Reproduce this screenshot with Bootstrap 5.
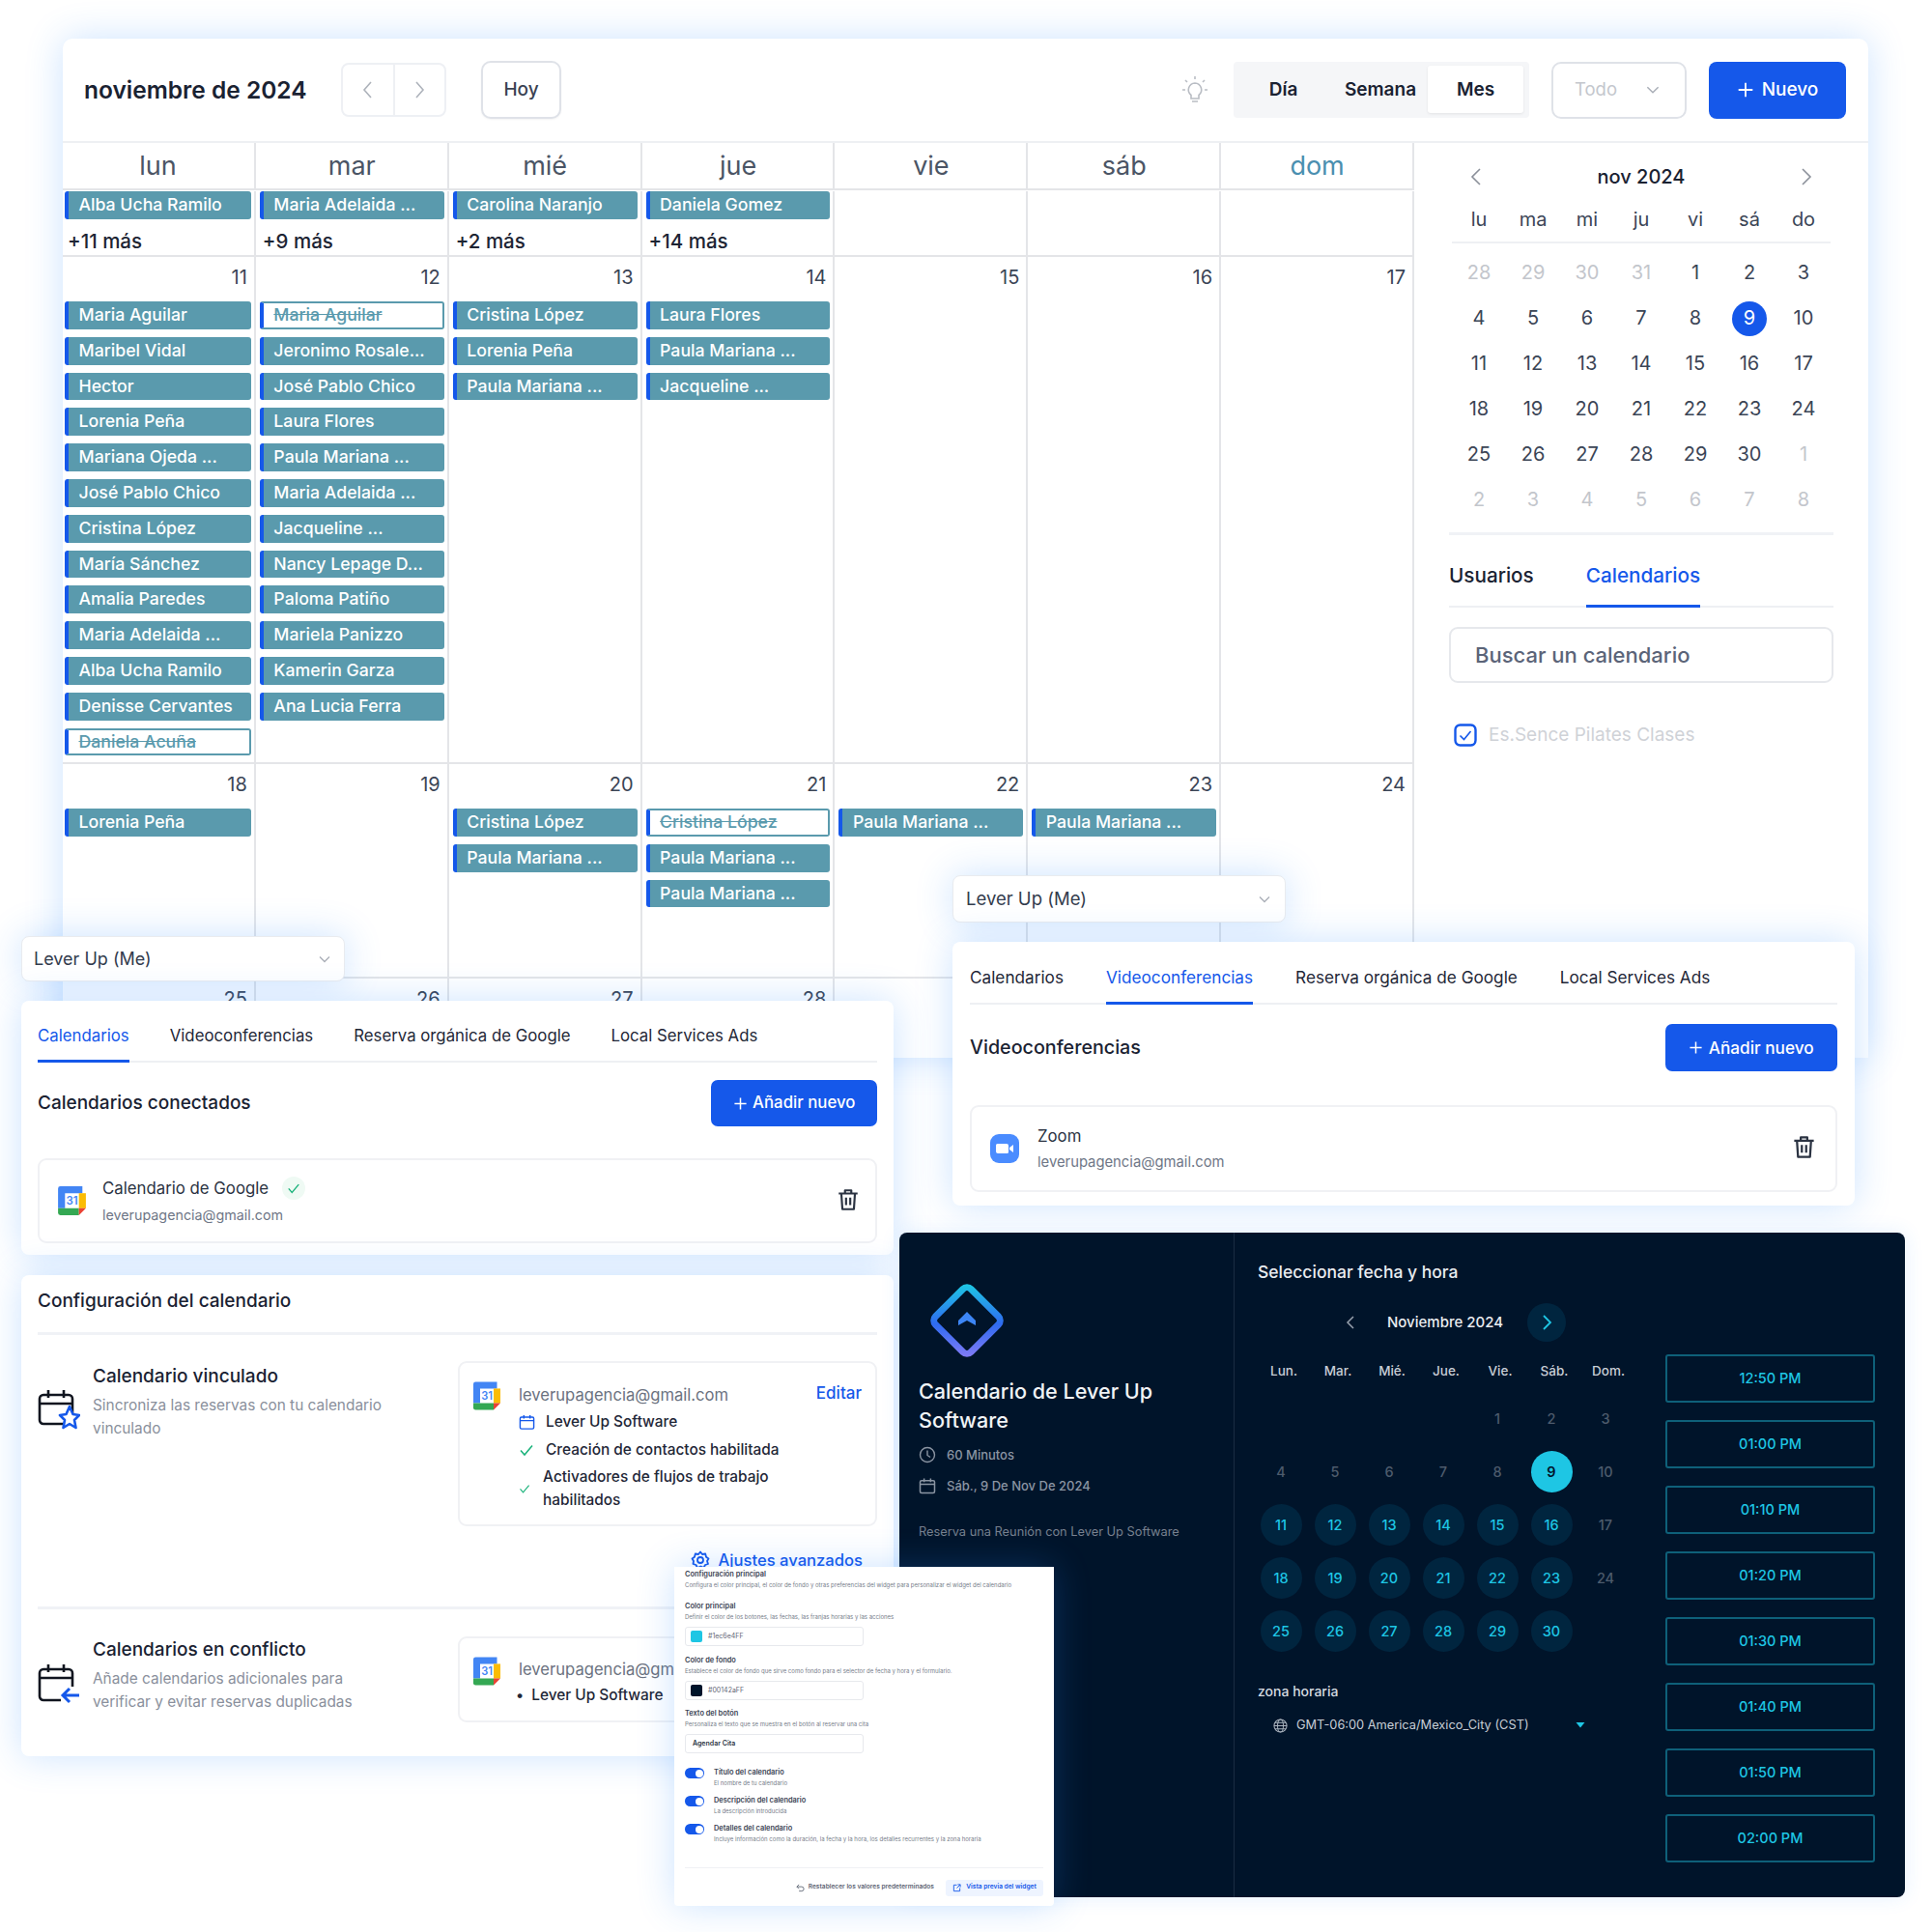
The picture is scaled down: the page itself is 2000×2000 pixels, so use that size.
<!DOCTYPE html>
<html lang="es">
<head>
  <meta charset="UTF-8" />
  <title>Lever Up - Calendarios</title>
  <link href="https://cdn.jsdelivr.net/npm/bootstrap@5.3.6/dist/css/bootstrap.min.css" rel="stylesheet" />
  <style>
    body {
      background: #fff;
      font-family: Inter, "Liberation Sans", sans-serif;
      color: #1d2433;
      width: 2000px;
      height: 2000px;
      position: relative;
      overflow: hidden;
    }

    /* windows of the collage */
    .win { position: absolute; background: #fff; box-shadow: 0 0 38px rgba(40, 140, 255, .24); border-radius: 8px; }
    .win-main { left: 65px; top: 40px; width: 1869px; height: 1055px; border-radius: 10px 10px 0 0; overflow: hidden; z-index: 1; }
    .win-sel-a { left: 22px; top: 969px; width: 335px; height: 47px; z-index: 2; }
    .win-tabs-a { left: 22px; top: 1036px; width: 903px; height: 263px; z-index: 2; padding: 25px 17px 0; }
    .win-conf { left: 22px; top: 1320px; width: 903px; height: 498px; z-index: 2; padding: 15px 17px 0; }
    .win-sel-c { left: 986px; top: 906px; width: 345px; height: 49px; z-index: 2; }
    .win-tabs-c { left: 986px; top: 975px; width: 934px; height: 273px; z-index: 2; padding: 26px 18px 0; }
    .win-dark { left: 931px; top: 1276px; width: 1041px; height: 688px; background: #00142a; color: #fff; z-index: 3; box-shadow: 0 0 20px rgba(40, 140, 255, .12); }
    .win-widget { left: 698px; top: 1622px; width: 393px; height: 351px; z-index: 4; border-radius: 0 0 4px 4px; padding: 0 11px; overflow: hidden; }

    .win-sel-a, .win-sel-c { border: 1px solid #e9ebef; font-size: 18px; color: #333c4d; padding: 0 12px; display: flex; align-items: center; justify-content: space-between; }
    .win-sel-c { font-size: 18.5px; padding: 0 13px; }

    /* calendar header */
    .cal-top { height: 108px; padding: 0 23px 0 22px; border-bottom: 2px solid #eef0f3; }
    .cal-title { font-size: 24.5px; font-weight: 600; width: 231px; color: #1a2232; white-space: nowrap; }
    .pager { width: 109px; height: 56px; margin-left: 35px; border: 2px solid #eef0f4; border-radius: 8px; }
    .pager > div { flex: 1; }
    .pager > div + div { border-left: 2px solid #eef0f4; }
    .btn-hoy { width: 83px; height: 60px; margin-left: 36px; border: 2px solid #dfe2e8; border-radius: 10px; font-size: 19px; font-weight: 500; color: #3a4252; background: #fff; box-shadow: 0 1px 2px rgba(0,0,0,.05); }
    .segment { width: 306px; height: 58px; background: #f5f6f8; border-radius: 4px; padding: 4px 4px 5px 0; font-size: 19px; font-weight: 600; color: #1a2232; margin-left: 26px; }
    .segment span { text-align: center; margin-top: 1px; }
    .segment .seg-on { width: 99px; background: #fff; border-radius: 3px; box-shadow: 0 1px 3px rgba(0,0,0,.08); line-height: 49px; margin-top: 0; }
    .btn-todo { width: 140px; height: 59px; margin-left: 23px; border: 2px solid #dfe2e8; border-radius: 10px; font-size: 18.5px; color: #c4c7cd; background: #fff; padding: 0 24px 0 22px; }
    .btn-blue { background: #1558ea; color: #fff; border: 0; border-radius: 7px; font-weight: 500; }
    .btn-blue:hover { background: #1558ea; color: #fff; }
    .btn-nuevo { width: 142px; height: 59px; margin-left: 23px; font-size: 19px; border-radius: 8px; }

    /* month grid */
    .month-grid { width: 1399px; flex: none; }
    .week { display: grid; grid-template-columns: repeat(7, 199.86px); border-bottom: 2px solid #e4e5e8; }
    .week > div { border-right: 2px solid #e4e5e8; padding: 0 3px 0 4px; min-width: 0; }
    .week > div:first-child { padding-left: 2px; }
    .wk-head { height: 49px; }
    .wk-head > div { font-size: 27px; text-align: center; color: #4b5565; line-height: 47px; }
    .wk-head > div:last-child { color: #4a8fb0; }
    .wk-1 { height: 69px; padding-top: 1px; }
    .wk-2 { height: 525px; }
    .wk-3 { height: 222px; }
    .wk-4 { height: 90px; }
    .day-num { text-align: right; font-size: 20px; color: #3b4556; height: 46px; line-height: 43px; padding-right: 4px; }
    .ev { height: 28.8px; margin-bottom: 8px; background: #5a9aad; border-left: 4px solid #1558ea; border-radius: 3px; color: #fff; font-size: 17.7px; font-weight: 500; line-height: 28px; padding-left: 10.5px; white-space: nowrap; overflow: hidden; }
    .ev-off { background: #fff; border: 2px solid #5a9aad; border-left: 4px solid #1558ea; color: #5a9aad; text-decoration: line-through; line-height: 24px; padding-left: 10.5px; }
    .more { font-size: 20.5px; font-weight: 500; color: #1d2433; padding-left: 3px; margin-top: 3px; line-height: 30px; }

    /* sidebar */
    .side { width: 470px; padding: 0 36px 0 36px; }
    .mini-title { margin-top: 23px; height: 24px; padding: 0 20px; font-size: 20px; font-weight: 500; color: #1a2232; }
    .mini-grid { display: grid; grid-template-columns: repeat(7, 56px); width: 392px; margin-left: 3px; font-size: 20px; color: #3b4556; text-align: center; }
    .mini-heads { margin-top: 17px; padding-bottom: 8px; border-bottom: 2px solid #eef0f3; line-height: 30px; }
    .mini-days { margin-top: 7px; grid-auto-rows: 47px; line-height: 47px; padding-bottom: 10px; border-bottom: 0; }
    .mini-days .dim { color: #c3c6cc; }
    .mini-days .today { position: relative; color: #fff; z-index: 0; }
    .mini-days .today::before { content: ""; position: absolute; z-index: -1; left: 10px; top: 6px; width: 36px; height: 36px; background: #1558ea; border-radius: 50%; }
    .side-tabs { margin-top: 0; border-top: 3px solid #f0f2f6; padding-top: 30px; border-bottom: 2px solid #eef0f3; font-size: 20.7px; font-weight: 500; gap: 54px; color: #1a2232; }
    .side-tabs span { padding-bottom: 18px; margin-bottom: -2px; line-height: 24px; }
    .tab-on { color: #1558ea; border-bottom: 3px solid #1558ea; }
    .side-search { height: 58px; margin-top: 20px; border: 2px solid #e6e8ec; border-radius: 9px; padding-left: 25px; font-size: 22px; font-weight: 500; line-height: 54px; color: #5b6478; }
    .side-check { margin: 40px 0 0 5px; font-size: 19px; color: #cfd2d7; gap: 12px; }

    /* tabs + cards in the settings windows */
    .set-tabs { border-bottom: 2px solid #eef0f3; font-size: 16.8px; gap: 42px; color: #1f2737; }
    .set-tabs span { padding-bottom: 14px; margin-bottom: -2px; line-height: 22px; }
    .set-tabs .tab-on { border-bottom-width: 3px; }
    .set-title { font-size: 19px; font-weight: 500; color: #1a2232; }
    .btn-add { height: 48px; font-size: 16.8px; padding: 0; gap: 5.5px; }
    .acc-card { border: 2px solid #f0f1f4; border-radius: 9px; background: #fff; }
    .acc-name { font-size: 16.8px; color: #2b3342; line-height: 22px; }
    .acc-mail { font-size: 14.3px; color: #6f7787; line-height: 22px; margin-top: 5px; }
    .acc-bin { margin-top: -3px; }
    .ok-dot { width: 24px; height: 24px; border-radius: 50%; background: #effaf4; margin-left: 14px; }
    .conf-rule { height: 3px; background: #f0f2f6; }
    .conf-head { font-size: 19px; font-weight: 500; color: #1a2232; line-height: 24px; }
    .conf-desc { font-size: 15.4px; color: #8a909c; line-height: 24px; margin-top: 6px; }
    .link-card { width: 434px; border: 2px solid #f0f1f4; border-radius: 9px; padding: 19px 14px 0; flex: none; }
    .link-mail { font-size: 16.6px; color: #6b7280; line-height: 24px; }
    .link-edit { font-size: 17px; font-weight: 500; color: #1558ea; }
    .link-row { font-size: 15.4px; font-weight: 500; color: #1f2737; line-height: 24px; }

    /* widget settings, shown small */
    .w-h { font-size: 7.4px; font-weight: 600; color: #3c4454; line-height: 10px; }
    .w-d { font-size: 6px; color: #767d8a; line-height: 10px; margin-top: 1px; white-space: nowrap; }
    .w-in { width: 185px; height: 20px; border: 1px solid #e7e9ed; border-radius: 3px; font-size: 7px; color: #5f6675; padding-left: 5px; margin-top: 5px; gap: 6px; }
    .w-sw { width: 12px; height: 12px; border-radius: 2px; }
    .w-toggle { width: 20px; height: 11px; border-radius: 6px; background: #1558ea; position: relative; flex: none; margin-right: 10px; }
    .w-toggle::after { content: ""; position: absolute; right: 1.5px; top: 1.5px; width: 8px; height: 8px; border-radius: 50%; background: #fff; }
    .w-foot { border-top: 1px solid #f0f1f4; height: 41px; font-size: 6.6px; font-weight: 600; color: #5f6675; margin-top: 24px; }
    .w-prev { height: 17px; width: 101px; background: #eef4ff; color: #1558ea; border-radius: 3px; margin-left: 12px; gap: 5px; }

    /* booking widget */
    .dk-left { width: 347px; height: 100%; border-right: 1px solid #1a2c42; padding: 49px 0 0 20px; flex: none; }
    .dk-title { font-size: 21.6px; font-weight: 500; line-height: 30px; margin-top: 16px; color: #f1f3f6; }
    .dk-meta { font-size: 13px; font-weight: 500; color: #8b95a3; line-height: 22px; gap: 11px; }
    .dk-note { font-size: 12.8px; color: #77818f; line-height: 22px; margin-top: 26px; }
    .dk-right { padding: 30px 0 0 24px; }
    .dk-head { font-size: 17.5px; font-weight: 500; color: #e9ecf0; line-height: 22px; }
    .dk-next { width: 40px; height: 40px; border-radius: 50%; background: #00253f; margin-left: -5px; }
    .dk-month { width: 180px; text-align: center; font-size: 15px; font-weight: 500; color: #e9ecf0; }
    .dk-grid { display: grid; grid-template-columns: repeat(7, 56px); margin-left: -4px; text-align: center; }
    .dk-heads { margin-top: 18px; font-size: 13.5px; font-weight: 500; color: #c8ced6; line-height: 22px; padding-left: 3px; }
    .dk-days { margin-top: 11px; grid-auto-rows: 55px; font-size: 14.5px; font-weight: 500; color: #4d5b6c; }
    .dk-days > div { display: flex; align-items: center; justify-content: center; }
    .dk-on { width: 43px; height: 43px; border-radius: 50%; background: #00253f; color: #1ec6e4; }
    .dk-sel { background: #1ec6e4; color: #00142a; font-weight: 600; }
    .dk-tz { font-size: 14px; font-weight: 500; color: #d5dae0; line-height: 22px; margin-top: 24px; }
    .dk-zone { font-size: 12.8px; color: #c8ced6; margin: 12px 0 0 16px; width: 323px; line-height: 24px; }
    .dk-slots { margin-top: 54px; gap: 18px; width: 217px; }
    .dk-slot { height: 50px; border: 2px solid #0e6079; border-radius: 3px; color: #1ec6e4; font-size: 14.5px; font-weight: 500; }
  </style>
</head>
<body>
  <svg width="0" height="0" class="position-absolute">
    <defs>
      <symbol id="gcal" viewBox="0 0 24 25">
        <rect width="24" height="25" rx="2" fill="#fff" />
        <path d="M2 0H21V6H6V19H0V2A2 2 0 0 1 2 0Z" fill="#4285f4" />
        <rect x="18" y="6" width="6" height="13" fill="#fbbc04" />
        <path d="M0 19H18V25H2A2 2 0 0 1 0 23Z" fill="#34a853" />
        <path d="M18 25V19H24Z" fill="#ea4335" />
        <text x="12" y="16" font-size="9.5" font-weight="600" text-anchor="middle" fill="#4285f4" font-family="Inter, sans-serif">31</text>
      </symbol>
      <symbol id="trash" viewBox="0 0 24 24">
        <path d="M3 6H21M9 6V3H15V6M5.5 6L6.5 21H17.5L18.5 6M10 10V17M14 10V17" fill="none" stroke="#2b3342" stroke-width="2" stroke-linejoin="round" />
      </symbol>
      <symbol id="plus" viewBox="0 0 16 16">
        <path d="M8 1.5V14.5M1.5 8H14.5" stroke="#fff" stroke-width="1.6" fill="none" />
      </symbol>
      <symbol id="drop" viewBox="0 0 16 16">
        <path d="M3 5.5L8 10.5L13 5.5" stroke="#a9aeb7" stroke-width="1.3" fill="none" />
      </symbol>
      <symbol id="tick" viewBox="0 0 16 16">
        <path d="M2 8.5L6 13L14 3.5" stroke="#19b27a" stroke-width="1.5" fill="none" />
      </symbol>
      <symbol id="calico" viewBox="0 0 24 24">
        <path d="M4 5H20A2 2 0 0 1 22 7V20A2 2 0 0 1 20 22H4A2 2 0 0 1 2 20V7A2 2 0 0 1 4 5ZM2 10H22M7.5 2V7M16.5 2V7" fill="none" stroke="currentColor" stroke-width="2" />
      </symbol>
      <linearGradient id="logoG" x1="0" y1="0" x2="1" y2="1">
        <stop offset="0" stop-color="#1ec6e4" />
        <stop offset=".55" stop-color="#2f6bf0" />
        <stop offset="1" stop-color="#7f7bf5" />
      </linearGradient>
    </defs>
  </svg>

  <!-- main calendar -->
  <div class="win win-main">
    <div class="cal-top d-flex align-items-center">
      <div class="cal-title">noviembre de 2024</div>
      <div class="pager d-flex">
        <div class="d-flex align-items-center justify-content-center">
          <svg width="16" height="22" viewBox="0 0 16 22"><path d="M11 3L4 11L11 19" fill="none" stroke="#aeb3bb" stroke-width="1.6" /></svg>
        </div>
        <div class="d-flex align-items-center justify-content-center">
          <svg width="16" height="22" viewBox="0 0 16 22"><path d="M5 3L12 11L5 19" fill="none" stroke="#aeb3bb" stroke-width="1.6" /></svg>
        </div>
      </div>
      <button class="btn btn-hoy p-0">Hoy</button>
      <div class="ms-auto d-flex align-items-center">
        <svg width="28" height="30" viewBox="0 0 28 30" fill="none" stroke="#b9bdc4" stroke-width="1.6">
          <path d="M14 8A7 7 0 0 1 18 20.5V24H10V20.5A7 7 0 0 1 14 8ZM11 27H17" />
          <path d="M14 1V4M4 5L6 7M24 5L22 7M1 15H4M24 15H27" />
        </svg>
        <div class="segment d-flex align-items-center">
          <span style="width:103px">Día</span>
          <span style="width:98px">Semana</span>
          <span class="seg-on">Mes</span>
        </div>
        <button class="btn btn-todo d-flex align-items-center justify-content-between">
          Todo
          <svg width="18" height="18"><use href="#drop" /></svg>
        </button>
        <button class="btn btn-blue btn-nuevo d-flex align-items-center justify-content-center gap-2 p-0">
          <svg width="18" height="18"><use href="#plus" /></svg>
          Nuevo
        </button>
      </div>
    </div>
    <div class="d-flex">
      <div class="month-grid" id="month-grid"></div>
      <div class="side">
        <div class="mini-title d-flex align-items-center justify-content-between">
          <svg width="16" height="22" viewBox="0 0 16 22"><path d="M12 3L4 11L12 19" fill="none" stroke="#8b909a" stroke-width="1.6" /></svg>
          <span>nov 2024</span>
          <svg width="16" height="22" viewBox="0 0 16 22"><path d="M4 3L12 11L4 19" fill="none" stroke="#8b909a" stroke-width="1.6" /></svg>
        </div>
        <div class="mini-grid mini-heads" id="mini-heads"></div>
        <div class="mini-grid mini-days" id="mini-days"></div>
        <div class="side-tabs d-flex">
          <span>Usuarios</span>
          <span class="tab-on">Calendarios</span>
        </div>
        <div class="side-search">Buscar un calendario</div>
        <div class="side-check d-flex align-items-center">
          <svg width="24" height="24" viewBox="0 0 24 24"><rect x="1.5" y="1.5" width="21" height="21" rx="5" fill="#fff" stroke="#1558ea" stroke-width="2.4" /><path d="M6.5 12.5L10.5 16.5L17.5 8" fill="none" stroke="#1558ea" stroke-width="1.6" /></svg>
          Es.Sence Pilates Clases
        </div>
      </div>
    </div>
  </div>

  <!-- connected calendars -->
  <div class="win win-sel-a">
    <span>Lever Up (Me)</span>
    <svg width="16" height="16"><use href="#drop" /></svg>
  </div>
  <div class="win win-tabs-a">
    <div class="set-tabs d-flex">
      <span class="tab-on">Calendarios</span>
      <span>Videoconferencias</span>
      <span>Reserva orgánica de Google</span>
      <span>Local Services Ads</span>
    </div>
    <div class="d-flex align-items-center justify-content-between" style="margin-top:18px">
      <div class="set-title">Calendarios conectados</div>
      <button class="btn btn-blue btn-add d-flex align-items-center justify-content-center" style="width:172px">
        <svg width="15" height="15"><use href="#plus" /></svg>Añadir nuevo
      </button>
    </div>
    <div class="acc-card d-flex align-items-center" style="margin-top:33px;height:88px;padding:0 15px 0 19px">
      <svg width="29" height="30"><use href="#gcal" /></svg>
      <div style="margin-left:17px">
        <div class="acc-name d-flex align-items-center">Calendario de Google
          <span class="ok-dot d-flex align-items-center justify-content-center"><svg width="14" height="14"><use href="#tick" /></svg></span>
        </div>
        <div class="acc-mail">leverupagencia@gmail.com</div>
      </div>
      <svg class="ms-auto acc-bin" width="26" height="26"><use href="#trash" /></svg>
    </div>
  </div>

  <!-- calendar configuration -->
  <div class="win win-conf">
    <div class="conf-head">Configuración del calendario</div>
    <div class="conf-rule" style="margin-top:20px"></div>
    <div class="d-flex" style="margin-top:27px">
      <div class="d-flex align-items-start flex-grow-1">
        <svg class="flex-none" style="margin-top:29px" width="44" height="42" viewBox="0 0 44 42">
          <g fill="none" stroke="#10151f" stroke-width="2.6"><path d="M6 6H32A4 4 0 0 1 36 10V36H6A4 4 0 0 1 2 32V10A4 4 0 0 1 6 6ZM2 15H36M11 1V9M27 1V9" /></g>
          <path d="M33 18L36.500 26L43 27L38 32L39.500 40L33 36L26.500 40L28 32L23 27L29.500 26Z" fill="#fff" stroke="#1558ea" stroke-width="2.6" stroke-linejoin="round" />
        </svg>
        <div style="margin-left:13px;width:330px">
          <div class="conf-head" style="margin-top:4px">Calendario vinculado</div>
          <div class="conf-desc">Sincroniza las reservas con tu calendario vinculado</div>
        </div>
      </div>
      <div class="link-card" style="height:171px">
        <div class="d-flex align-items-start">
          <svg width="28" height="30"><use href="#gcal" /></svg>
          <div class="flex-grow-1" style="margin-left:19px">
            <div class="d-flex justify-content-between">
              <span class="link-mail" style="margin-top:2px">leverupagencia@gmail.com</span>
              <span class="link-edit">Editar</span>
            </div>
            <div class="link-row d-flex align-items-center" style="height:29px;margin-top:1px">
              <svg style="color:#1558ea" width="17" height="18"><use href="#calico" /></svg>
              <span style="margin-left:11px">Lever Up Software</span>
            </div>
            <div class="link-row d-flex align-items-center" style="height:29px">
              <svg width="16" height="16"><use href="#tick" /></svg>
              <span style="margin-left:12px">Creación de contactos habilitada</span>
            </div>
            <div class="link-row d-flex align-items-center" style="margin-top:2px;width:300px">
              <svg class="flex-none" width="14" height="14"><use href="#tick" /></svg>
              <span style="margin-left:13px">Activadores de flujos de trabajo habilitados</span>
            </div>
          </div>
        </div>
      </div>
    </div>
    <div class="d-flex justify-content-end align-items-center" style="margin-top:23px;padding-right:15px;font-size:16.6px;font-weight:500;color:#1558ea;line-height:24px;gap:9px">
      <svg width="20" height="20" viewBox="0 0 20 20" fill="none" stroke="#1558ea" stroke-width="1.8"><path d="M10 1.500L12 4L15.200 3.500L16 6.700L18.500 8.500L17 11L18 14L15 15L13.500 18L10.500 16.500L7 18L5.500 15L2.500 14L3 11L1.500 8.500L4 6.700L4.800 3.500L8 4Z" stroke-linejoin="round" /><circle cx="10" cy="10" r="3" /></svg>
      Ajustes avanzados
    </div>
    <div class="conf-rule" style="margin-top:36px"></div>
    <div class="d-flex" style="margin-top:28px">
      <div class="d-flex align-items-start flex-grow-1">
        <svg class="flex-none" style="margin-top:28px" width="44" height="42" viewBox="0 0 44 42">
          <g fill="none" stroke="#10151f" stroke-width="2.6"><path d="M24 38H6A4 4 0 0 1 2 34V10A4 4 0 0 1 6 6H32A4 4 0 0 1 36 10V24M2 15H36M11 1V9M27 1V9" /></g>
          <path d="M43 33H26M33 26L26 33L33 40" fill="none" stroke="#1558ea" stroke-width="3" />
        </svg>
        <div style="margin-left:13px;width:310px">
          <div class="conf-head" style="margin-top:2px">Calendarios en conflicto</div>
          <div class="conf-desc">Añade calendarios adicionales para verificar y evitar reservas duplicadas</div>
        </div>
      </div>
      <div class="link-card" style="height:89px">
        <div class="d-flex align-items-start">
          <svg width="28" height="30"><use href="#gcal" /></svg>
          <div style="margin-left:19px">
            <div class="link-mail" style="margin-top:1px">leverupagencia@gm</div>
            <div class="link-row d-flex" style="margin:3px 0 0 -3px"><span>•</span><span style="margin-left:8px">Lever Up Software</span></div>
          </div>
        </div>
      </div>
    </div>
  </div>

  <!-- video conferencing -->
  <div class="win win-sel-c">
    <span>Lever Up (Me)</span>
    <svg width="16" height="16"><use href="#drop" /></svg>
  </div>
  <div class="win win-tabs-c">
    <div class="set-tabs d-flex" style="font-size:17.2px;gap:44px">
      <span>Calendarios</span>
      <span class="tab-on">Videoconferencias</span>
      <span>Reserva orgánica de Google</span>
      <span>Local Services Ads</span>
    </div>
    <div class="d-flex align-items-center justify-content-between" style="margin-top:20px">
      <div class="set-title" style="font-size:19.7px">Videoconferencias</div>
      <button class="btn btn-blue btn-add d-flex align-items-center justify-content-center" style="width:178px;height:49px;font-size:17.2px">
        <svg width="15" height="15"><use href="#plus" /></svg>Añadir nuevo
      </button>
    </div>
    <div class="acc-card d-flex align-items-center" style="margin-top:35px;height:90px;padding:0 19px 0 19px">
      <svg width="30" height="30" viewBox="0 0 30 30">
        <rect width="30" height="30" rx="9" fill="#4a8cff" />
        <path d="M6 11.500A1.500 1.500 0 0 1 7.500 10H17A2 2 0 0 1 19 12V18.500A1.500 1.500 0 0 1 17.500 20H8A2 2 0 0 1 6 18ZM20 14L24 11V19L20 16Z" fill="#fff" />
      </svg>
      <div style="margin-left:19px">
        <div class="acc-name">Zoom</div>
        <div class="acc-mail" style="font-size:14.8px">leverupagencia@gmail.com</div>
      </div>
      <svg class="ms-auto acc-bin" width="27" height="27"><use href="#trash" /></svg>
    </div>
  </div>

  <!-- booking widget -->
  <div class="win win-dark d-flex">
    <div class="dk-left">
      <svg style="margin-left:8px" width="84" height="84" viewBox="0 0 84 84">
        <rect x="16" y="16" width="52" height="52" rx="6" transform="rotate(45 42 42)" fill="none" stroke="url(#logoG)" stroke-width="7" />
        <path d="M42 33L51 42V47L42 42L33 47V42Z" fill="#3d86f5" />
      </svg>
      <div class="dk-title">Calendario de Lever Up<br />Software</div>
      <div class="dk-meta d-flex align-items-center" style="margin-top:10px">
        <svg width="18" height="18" viewBox="0 0 18 18" fill="none" stroke="#8b95a3" stroke-width="1.400"><circle cx="9" cy="9" r="7.500" /><path d="M9 4.500V9.500L12 11.500" /></svg>
        60 Minutos
      </div>
      <div class="dk-meta d-flex align-items-center" style="margin-top:10px">
        <svg width="18" height="18" style="color:#8b95a3"><use href="#calico" /></svg>
        Sáb., 9 De Nov De 2024
      </div>
      <div class="dk-note">Reserva una Reunión con Lever Up Software</div>
    </div>
    <div class="dk-right flex-grow-1">
      <div class="dk-head">Seleccionar fecha y hora</div>
      <div class="d-flex" style="margin-top:20px">
        <div style="width:422px;flex:none">
          <div class="d-flex align-items-center" style="height:42px;margin-left:88px">
            <svg width="16" height="20" viewBox="0 0 16 20"><path d="M11 4L5 10L11 16" fill="none" stroke="#98a2ae" stroke-width="1.500" /></svg>
            <div class="dk-month">Noviembre 2024</div>
            <div class="dk-next d-flex align-items-center justify-content-center">
              <svg width="16" height="20" viewBox="0 0 16 20"><path d="M5 3L12 10L5 17" fill="none" stroke="#1ec6e4" stroke-width="1.800" /></svg>
            </div>
          </div>
          <div class="dk-grid dk-heads" id="dk-heads"></div>
          <div class="dk-grid dk-days" id="dk-days"></div>
          <div class="dk-tz">zona horaria</div>
          <div class="dk-zone d-flex align-items-center">
            <svg width="15" height="15" viewBox="0 0 16 16" fill="none" stroke="#a9b2bd" stroke-width="1.100"><circle cx="8" cy="8" r="7" /><ellipse cx="8" cy="8" rx="3.200" ry="7" /><path d="M1 8H15M2 4.500H14M2 11.500H14" /></svg>
            <span style="margin-left:9px">GMT-06:00 America/Mexico_City (CST)</span>
            <svg class="ms-auto" width="10" height="8" viewBox="0 0 10 8"><path d="M0.500 1H9.500L5 6.500Z" fill="#1ec6e4" /></svg>
          </div>
        </div>
        <div class="dk-slots d-flex flex-column" id="dk-slots"></div>
      </div>
    </div>
  </div>

  <!-- widget options -->
  <div class="win win-widget">
    <div class="w-h" style="margin-top:3px">Configuración principal</div>
    <div class="w-d">Configura el color principal, el color de fondo y otras preferencias del widget para personalizar el widget del calendario</div>
    <div class="w-h" style="margin-top:12px">Color principal</div>
    <div class="w-d">Definir el color de los botones, las fechas, las franjas horarias y las acciones</div>
    <div class="w-in d-flex align-items-center"><span class="w-sw" style="background:#1ec6e4"></span>#1ec6e4FF</div>
    <div class="w-h" style="margin-top:10px">Color de fondo</div>
    <div class="w-d">Establece el color de fondo que sirve como fondo para el selector de fecha y hora y el formulario.</div>
    <div class="w-in d-flex align-items-center"><span class="w-sw" style="background:#00142a"></span>#00142aFF</div>
    <div class="w-h" style="margin-top:9px">Texto del botón</div>
    <div class="w-d">Personaliza el texto que se muestra en el botón al reservar una cita</div>
    <div class="w-in d-flex align-items-center" style="color:#2b3342;font-weight:600;padding-left:7px">Agendar Cita</div>
    <div class="d-flex align-items-start" style="margin-top:15px"><span class="w-toggle"></span><div><div class="w-h">Título del calendario</div><div class="w-d">El nombre de tu calendario</div></div></div>
    <div class="d-flex align-items-start" style="margin-top:8px"><span class="w-toggle"></span><div><div class="w-h">Descripción del calendario</div><div class="w-d">La descripción introducida</div></div></div>
    <div class="d-flex align-items-start" style="margin-top:8px"><span class="w-toggle"></span><div><div class="w-h">Detalles del calendario</div><div class="w-d">Incluye información como la duración, la fecha y la hora, los detalles recurrentes y la zona horaria</div></div></div>
    <div class="w-foot d-flex align-items-center justify-content-end">
      <svg style="margin-right:4px" width="9" height="9" viewBox="0 0 10 10" fill="none" stroke="#5f6675" stroke-width="1"><path d="M3.500 1L1 3.500L3.500 6M1 3.500H6.500A2.500 2.500 0 0 1 6.500 8.500H3.500" /></svg>
      <span>Restablecer los valores predeterminados</span>
      <span class="w-prev d-flex align-items-center justify-content-center">
        <svg width="9" height="9" viewBox="0 0 10 10" fill="none" stroke="#1558ea" stroke-width="1"><path d="M5 1.500H1.500V8.500H8.500V5M5 5L9 1M6 1H9V4" /></svg>
        Vista previa del widget
      </span>
    </div>
  </div>

  <script>
    // --- Month grid ---
    const P = "Paula Mariana ...";
    const weeks = [
      { cls: "wk-1", cells: [
        { ev: ["Alba Ucha Ramilo"], more: "+11 más" },
        { ev: ["Maria Adelaida ..."], more: "+9 más" },
        { ev: ["Carolina Naranjo"], more: "+2 más" },
        { ev: ["Daniela Gomez"], more: "+14 más" },
        {}, {}, {}
      ]},
      { cls: "wk-2", cells: [
        { n: 11, ev: ["Maria Aguilar", "Maribel Vidal", "Hector", "Lorenia Peña", "Mariana Ojeda ...", "José Pablo Chico", "Cristina López", "María Sánchez", "Amalia Paredes", "Maria Adelaida ...", "Alba Ucha Ramilo", "Denisse Cervantes", "~Daniela Acuña"] },
        { n: 12, ev: ["~Maria Aguilar", "Jeronimo Rosale...", "José Pablo Chico", "Laura Flores", P, "Maria Adelaida ...", "Jacqueline ...", "Nancy Lepage D...", "Paloma Patiño", "Mariela Panizzo", "Kamerin Garza", "Ana Lucia Ferra"] },
        { n: 13, ev: ["Cristina López", "Lorenia Peña", P] },
        { n: 14, ev: ["Laura Flores", P, "Jacqueline ..."] },
        { n: 15 }, { n: 16 }, { n: 17 }
      ]},
      { cls: "wk-3", cells: [
        { n: 18, ev: ["Lorenia Peña"] },
        { n: 19 },
        { n: 20, ev: ["Cristina López", P] },
        { n: 21, ev: ["~Cristina López", P, P] },
        { n: 22, ev: [P] },
        { n: 23, ev: [P] },
        { n: 24 }
      ]},
      { cls: "wk-4", cells: [{ n: 25 }, { n: 26 }, { n: 27 }, { n: 28 }, { n: 29 }, { n: 30 }, { n: 1 }] }
    ];

    const grid = document.getElementById("month-grid");
    grid.innerHTML = `<div class="week wk-head">${["lun", "mar", "mié", "jue", "vie", "sáb", "dom"].map(d => `<div>${d}</div>`).join("")}</div>`;

    weeks.forEach(w => {
      const row = document.createElement("div");
      row.className = "week " + w.cls;
      w.cells.forEach(c => {
        const cell = document.createElement("div");
        if (c.n) cell.innerHTML += `<div class="day-num">${c.n}</div>`;
        (c.ev || []).forEach(t => {
          const off = t[0] === "~";
          cell.innerHTML += `<div class="ev${off ? " ev-off" : ""}">${off ? t.slice(1) : t}</div>`;
        });
        if (c.more) cell.innerHTML += `<div class="more">${c.more}</div>`;
        row.appendChild(cell);
      });
      grid.appendChild(row);
    });

    // --- Small calendar ---
    document.getElementById("mini-heads").innerHTML =
      ["lu", "ma", "mi", "ju", "vi", "sá", "do"].map(d => `<div>${d}</div>`).join("");

    let mini = "";
    [28, 29, 30, 31].forEach(d => mini += `<div class="dim">${d}</div>`);
    for (let d = 1; d <= 30; d++) mini += `<div${d === 9 ? ' class="today"' : ""}>${d}</div>`;
    [1, 2, 3, 4, 5, 6, 7, 8].forEach(d => mini += `<div class="dim">${d}</div>`);
    document.getElementById("mini-days").innerHTML = mini;

    // --- Booking widget ---
    document.getElementById("dk-heads").innerHTML =
      ["Lun.", "Mar.", "Mié.", "Jue.", "Vie.", "Sáb.", "Dom."].map(d => `<div>${d}</div>`).join("");

    const free = [9, 11, 12, 13, 14, 15, 16, 18, 19, 20, 21, 22, 23, 25, 26, 27, 28, 29, 30];
    let dk = "<div></div><div></div><div></div><div></div>";
    for (let d = 1; d <= 30; d++) {
      if (!free.includes(d)) dk += `<div>${d}</div>`;
      else dk += `<div><span class="dk-on d-flex align-items-center justify-content-center${d === 9 ? " dk-sel" : ""}">${d}</span></div>`;
    }
    document.getElementById("dk-days").innerHTML = dk;

    document.getElementById("dk-slots").innerHTML =
      ["12:50 PM", "01:00 PM", "01:10 PM", "01:20 PM", "01:30 PM", "01:40 PM", "01:50 PM", "02:00 PM"]
        .map(s => `<div class="dk-slot d-flex align-items-center justify-content-center">${s}</div>`).join("");
  </script>
  <script src="https://cdn.jsdelivr.net/npm/bootstrap@5.3.6/dist/js/bootstrap.bundle.min.js"></script>
</body>
</html>
